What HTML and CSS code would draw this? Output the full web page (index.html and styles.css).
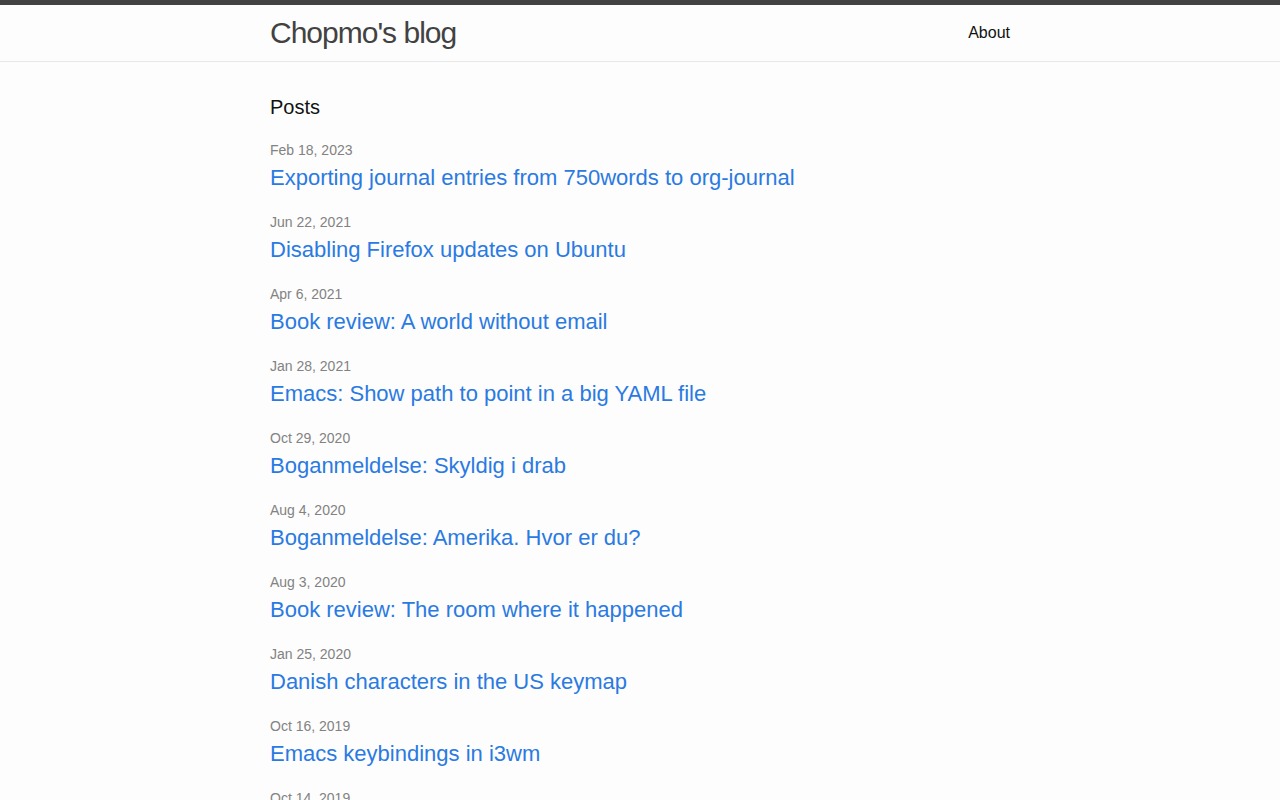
FILE: index.html
```html
<!DOCTYPE html>
<html lang="en">
<head>
<meta charset="utf-8">
<title>Chopmo's blog</title>
<link rel="stylesheet" href="styles.css">
</head>
<body>
<header class="site-header">
  <div class="wrapper header-inner">
    <a class="site-title" href="#">Chopmo's blog</a>
    <nav class="site-nav"><a class="page-link" href="#">About</a></nav>
  </div>
</header>
<main class="page-content">
  <div class="wrapper">
    <h2 class="post-list-heading">Posts</h2>
    <ul class="post-list">
      <li><span class="post-meta">Feb 18, 2023</span><h3><a class="post-link" href="#">Exporting journal entries from 750words to org-journal</a></h3></li>
      <li><span class="post-meta">Jun 22, 2021</span><h3><a class="post-link" href="#">Disabling Firefox updates on Ubuntu</a></h3></li>
      <li><span class="post-meta">Apr 6, 2021</span><h3><a class="post-link" href="#">Book review: A world without email</a></h3></li>
      <li><span class="post-meta">Jan 28, 2021</span><h3><a class="post-link" href="#">Emacs: Show path to point in a big YAML file</a></h3></li>
      <li><span class="post-meta">Oct 29, 2020</span><h3><a class="post-link" href="#">Boganmeldelse: Skyldig i drab</a></h3></li>
      <li><span class="post-meta">Aug 4, 2020</span><h3><a class="post-link" href="#">Boganmeldelse: Amerika. Hvor er du?</a></h3></li>
      <li><span class="post-meta">Aug 3, 2020</span><h3><a class="post-link" href="#">Book review: The room where it happened</a></h3></li>
      <li><span class="post-meta">Jan 25, 2020</span><h3><a class="post-link" href="#">Danish characters in the US keymap</a></h3></li>
      <li><span class="post-meta">Oct 16, 2019</span><h3><a class="post-link" href="#">Emacs keybindings in i3wm</a></h3></li>
      <li><span class="post-meta">Oct 14, 2019</span><h3><a class="post-link" href="#">Emacs tips</a></h3></li>
    </ul>
  </div>
</main>
</body>
</html>
```
FILE: styles.css
```css
* { box-sizing: border-box; }
html, body { margin: 0; padding: 0; }
body {
  background: #fdfdfd;
  color: #111;
  font: 400 16px/1.5 "Liberation Sans", Arial, Helvetica, sans-serif;
}
.wrapper {
  max-width: 740px;
  margin: 0 auto;
}
.site-header {
  border-top: 5px solid #424242;
  border-bottom: 1px solid #e8e8e8;
  min-height: 62px;
}
.header-inner {
  display: flex;
  justify-content: space-between;
  align-items: flex-start;
}
.site-title {
  font-size: 30px;
  font-weight: 300;
  letter-spacing: -1px;
  line-height: 56px;
  color: #424242;
  text-decoration: none;
}
.page-link {
  color: #111;
  line-height: 56px;
  text-decoration: none;
}
.page-content {
  padding: 30px 0;
}
.post-list-heading {
  font-size: 20px;
  font-weight: 400;
  line-height: 30px;
  margin: 0 0 17px;
}
.post-list {
  list-style: none;
  margin: 0;
  padding: 0;
}
.post-list li {
  margin-bottom: 16px;
}
.post-meta {
  display: block;
  font-size: 14px;
  line-height: 22px;
  color: #828282;
}
.post-list h3 {
  margin: 0;
  font-size: 22px;
  font-weight: 400;
  line-height: 34px;
}
.post-link {
  color: #2a7ae2;
  text-decoration: none;
}
```
